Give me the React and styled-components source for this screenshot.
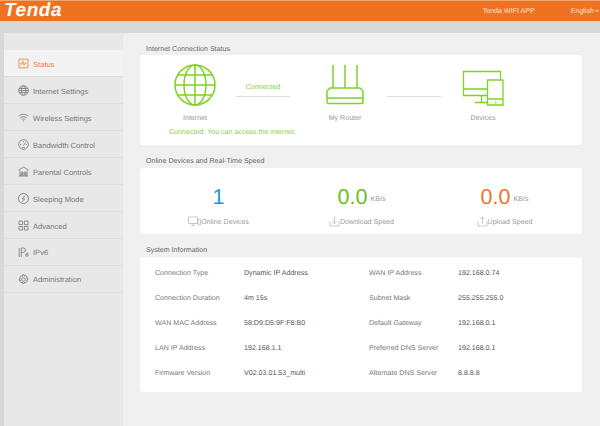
import React from 'react';
import styled, { createGlobalStyle } from 'styled-components';

const GlobalStyle = createGlobalStyle`
  html, body {
    margin: 0;
    padding: 0;
    background: #d8d8d8;
  }
  body {
    font-family: "Liberation Sans", Arial, sans-serif;
    text-rendering: geometricPrecision;
    overflow: hidden;
  }
`;

const Page = styled.div`
  width: 600px;
  height: 426px;
  display: flex;
  flex-direction: column;
  overflow: hidden;
`;

const Header = styled.header`
  height: 20px;
  flex: none;
  display: flex;
  align-items: center;
  background: #ef7221;
  border-top: 1px solid #f3a473;
  color: #fbe6d8;
  font-size: 7.1px;
`;

const Logo = styled.div`
  margin-left: 4px;
  font-size: 19px;
  font-weight: 700;
  font-style: italic;
  letter-spacing: 0.6px;
  color: #fff;
  line-height: 20px;
`;

const AppLink = styled.span`
  margin-left: auto;
`;

const Language = styled.span`
  margin-left: 36px;
  margin-right: 1px;
  display: flex;
  align-items: center;
  gap: 1px;
`;

const Caret = styled.i`
  width: 0;
  height: 0;
  border-left: 2px solid transparent;
  border-right: 2px solid transparent;
  border-top: 2px solid #fbe6d8;
`;

const Body = styled.div`
  flex: 1;
  display: flex;
  padding: 12px 0 0 4px;
  min-height: 0;
`;

const Sidebar = styled.nav`
  width: 119px;
  flex: none;
  padding-top: 17px;
  background: #e8e8e8;
`;

const NavItem = styled.div`
  height: 26px;
  display: flex;
  align-items: center;
  border-bottom: 1px solid #dedede;
  padding-left: 14px;
  gap: 4px;
  font-size: 7.6px;
  color: ${(p) => (p.$active ? '#ef7f3e' : '#777')};
  background: ${(p) => (p.$active ? '#f2f2f2' : 'transparent')};
`;

const NavLabel = styled.span`
  position: relative;
  top: ${(p) => (p.$raised ? 0 : 1)}px;
`;

const NavIcon = styled.svg`
  width: 11px;
  height: 11px;
  flex: none;
  fill: none;
  stroke: ${(p) => (p.$active ? '#ef7f3e' : '#777')};
  stroke-width: 0.8;
`;

const Main = styled.main`
  flex: 1;
  background: #f0f0f0;
  padding: 10px 18px 0 17px;
  border-radius: 2px 0 0 0;
`;

const SectionTitle = styled.h2`
  margin: 0 0 0 6px;
  height: 13px;
  line-height: 13px;
  font-size: 7.1px;
  font-weight: 400;
  color: #666;

  &:first-child {
    height: 12px;
  }
`;

const Card = styled.section`
  background: #fff;
  border-radius: 2px;
  height: ${(p) => p.$height}px;
  margin-bottom: ${(p) => p.$gap}px;
  box-sizing: border-box;
  box-shadow: 0 0 1px #e4e4e4;
`;

const StatusCard = styled(Card)`
  padding: 8px 0 0 30px;
`;

const StatusRow = styled.div`
  display: flex;
  align-items: flex-start;
`;

const Node = styled.div`
  width: 50px;
  display: flex;
  flex-direction: column;
  align-items: center;
  font-size: 7.1px;
  line-height: 10px;
  color: #999;
`;

const NodeIcon = styled.svg`
  width: 50px;
  height: 44px;
  fill: none;
  stroke: #7ed321;
  margin-bottom: 6px;
`;

const LinkLine = styled.div`
  width: 54px;
  height: 14px;
  margin: 0 ${(p) => p.$right}px 0 ${(p) => p.$left}px;
  border-bottom: 1px solid #ddd;
  text-align: center;
  font-size: 7.1px;
  line-height: 10px;
  padding-top: 19px;
  color: #86cf3d;
`;

const StatusNote = styled.p`
  margin: 4px 0 0 -1px;
  font-size: 7.1px;
  line-height: 10px;
  color: #85d03f;
`;

const SpeedGrid = styled.div`
  height: 100%;
  padding: 0 6px 0 7px;
  display: grid;
  grid-template-columns: repeat(3, 1fr);
`;

const Speed = styled.div`
  display: flex;
  flex-direction: column;
  align-items: center;
`;

const ValueRow = styled.div`
  height: 30px;
  margin-top: 14px;
  display: flex;
  align-items: center;
  gap: 3px;
  color: ${(p) => p.$color};
  font-size: 21.5px;
  line-height: 30px;
`;

const Unit = styled.span`
  font-size: 7.1px;
  color: #999;
  margin-top: 4px;
`;

const SpeedLabel = styled.div`
  margin-top: 4px;
  display: flex;
  align-items: center;
  font-size: 7.1px;
  line-height: 10px;
  color: #999;
`;

const SmallIcon = styled.svg`
  width: ${(p) => p.$width || 11}px;
  height: 11px;
  fill: none;
  stroke: #bbb;
  stroke-width: 0.8;
`;

const InfoGrid = styled.dl`
  margin: 0;
  padding: 3px 0 0 15px;
  display: grid;
  grid-template-columns: 89px 125px 89px 1fr;
  grid-auto-rows: 25px;
  align-items: center;
  font-size: 7.1px;
`;

const InfoLabel = styled.dt`
  color: #777;
`;

const InfoValue = styled.dd`
  margin: 0;
  color: #555;
`;

const navItems = [
  ['Status', <path key="s" d="M1 1.200h9v8.600H1zM2 6h1.800l1-2.700 1.200 4 1-2.300h2" />],
  ['Internet Settings', <path key="i" d="M5.500 .7a4.800 4.800 0 1 0 .01 0zM5.500 .7c-3 2.700-3 7 0 9.600M5.500 .7c3 2.700 3 7 0 9.600M1.200 3.500h8.600M.7 5.500h9.600M1.200 7.500h8.600" />],
  ['Wireless Settings', <path key="w" d="M.5 4.200c2.900-2.500 7.100-2.500 10 0M2.200 5.900c1.900-1.600 4.700-1.600 6.600 0M3.800 7.500c1-.8 2.400-.8 3.400 0M5 9h1" />],
  ['Bandwidth Control', <path key="b" d="M5.500 .7a4.800 4.800 0 1 0 .01 0zM5.500 6.500l2-3M2.200 5.500h1M7.800 5.500h1M5.500 2.200v1M4 8.700h3" />],
  ['Parental Controls', <path key="p" d="M.5 4.300l5-3.300 5 3.300M2 4.500v5.500M9 4.500v5.500M.8 10h9.400M4 6a1 1 0 1 0 .01 0zM7 6a1 1 0 1 0 .01 0zM3 10V8.300h2V10M6 10V8.300h2V10" />],
  ['Sleeping Mode', <path key="z" d="M5.500 .5a5 5 0 1 0 .01 0zM6.800 2.800 4.300 6h2.400l-2.200 2.500" />],
  ['Advanced', <path key="a" d="M1 1h3.600v3.600H1zM6.400 1H10v3.600H6.400zM1 6.400h3.600V10H1zM6.400 6.400H10V10H6.400z" />],
  ['IPv6', <path key="6" d="M1.200 1v9M3.300 10V1h2a2.100 2.100 0 0 1 0 4.400h-2M10.200 6.300c-1.500-.6-2.400.4-2.400 1.800a1.200 1.200 0 1 0 2.400 0c0-.9-1.400-1.300-2.400-.3" />],
  ['Administration', <path key="g" d="M5.500 3.700a1.800 1.800 0 1 0 .01 0zM4.700 .8h1.600l.3 1.300 1.200-.6 1.300 1.300-.6 1.200 1.300.3v1.600l-1.300.3.6 1.200-1.300 1.300-1.200-.6-.3 1.300H4.700l-.3-1.300-1.200.6-1.300-1.300.6-1.200L1.200 6.300V4.700l1.300-.3-.6-1.200 1.300-1.300 1.200.6z" />],
];

const infoRows = [
  ['Connection Type', 'Dynamic IP Address', 'WAN IP Address', '192.168.0.74'],
  ['Connection Duration', '4m 15s', 'Subnet Mask', '255.255.255.0'],
  ['WAN MAC Address', '58:D9:D5:9F:F8:B0', 'Default Gateway', '192.168.0.1'],
  ['LAN IP Address', '192.168.1.1', 'Preferred DNS Server', '192.168.0.1'],
  ['Firmware Version', 'V02.03.01.53_multi', 'Alternate DNS Server', '8.8.8.8'],
];

const GlobeIcon = () => (
  <NodeIcon viewBox="0 0 50 44" strokeWidth="1.500">
    <circle cx="25" cy="22" r="20" />
    <ellipse cx="25" cy="22" rx="11" ry="20" />
    <path d="M25 2v40M5 22h40M8 12h34M8 32h34" />
  </NodeIcon>
);

const RouterIcon = () => (
  <NodeIcon viewBox="0 0 50 44" strokeWidth="1.500">
    <path d="M13 2v23M25 2v23M37 2v23" />
    <path d="M10 25h30l3 3v11a1.500 1.500 0 0 1-1.500 1.500h-33A1.500 1.500 0 0 1 7 39V28zM7 35h36" />
  </NodeIcon>
);

const DevicesIcon = () => (
  <NodeIcon viewBox="0 0 50 44" strokeWidth="1.300">
    <path d="M29 32.500H5.500V8.500h37v8M5.500 26H29M23.500 32.500V39M17 39.500h12" />
    <path d="M29.500 17h15.500v25H29.500zM29.500 36h15.500M37 39.500h1.500" />
  </NodeIcon>
);

const App = () => (
  <Page>
    <GlobalStyle />
    <Header>
      <Logo>Tenda</Logo>
      <AppLink>Tenda WIFI APP</AppLink>
      <Language>
        English <Caret />
      </Language>
    </Header>
    <Body>
      <Sidebar>
        {navItems.map(([label, icon], i) => (
          <NavItem key={label} $active={i === 0}>
            <NavIcon viewBox="0 0 11 11" $active={i === 0}>{icon}</NavIcon>
            <NavLabel $raised={i >= 7}>{label}</NavLabel>
          </NavItem>
        ))}
      </Sidebar>
      <Main>
        <SectionTitle>Internet Connection Status</SectionTitle>
        <StatusCard $height={90} $gap={10}>
          <StatusRow>
            <Node><GlobeIcon />Internet</Node>
            <LinkLine $left={16} $right={30}>Connected</LinkLine>
            <Node><RouterIcon />My Router</Node>
            <LinkLine $left={17} $right={17} />
            <Node><DevicesIcon />Devices</Node>
          </StatusRow>
          <StatusNote>Connected. You can access the internet.</StatusNote>
        </StatusCard>

        <SectionTitle>Online Devices and Real-Time Speed</SectionTitle>
        <Card $height={66} $gap={10}>
          <SpeedGrid>
            <Speed>
              <ValueRow $color="#1b9ad6">1</ValueRow>
              <SpeedLabel>
                <SmallIcon viewBox="0 0 13 11" $width={13}>
                  <path d="M.5 1h9v6.500h-9zM3 9.500h4M5 7.500v2M10 3.500h2.500v5.500H10z" />
                </SmallIcon>
                Online Devices
              </SpeedLabel>
            </Speed>
            <Speed>
              <ValueRow $color="#64bf17">0.0<Unit>KB/s</Unit></ValueRow>
              <SpeedLabel>
                <SmallIcon viewBox="0 0 11 11">
                  <path d="M1 5.500v4.500h9V5.500M5.500 .5v7M3.300 5.500l2.200 2.200 2.200-2.200" />
                </SmallIcon>
                Download Speed
              </SpeedLabel>
            </Speed>
            <Speed>
              <ValueRow $color="#f0722a">0.0<Unit>KB/s</Unit></ValueRow>
              <SpeedLabel>
                <SmallIcon viewBox="0 0 11 11">
                  <path d="M1 5.500v4.500h9V5.500M5.500 8V.8M3.300 3l2.200-2.200L7.700 3" />
                </SmallIcon>
                Upload Speed
              </SpeedLabel>
            </Speed>
          </SpeedGrid>
        </Card>

        <SectionTitle>System Information</SectionTitle>
        <Card $height={135} $gap={0}>
          <InfoGrid>
            {infoRows.map(([a, b, c, d]) => (
              <React.Fragment key={a}>
                <InfoLabel>{a}</InfoLabel>
                <InfoValue>{b}</InfoValue>
                <InfoLabel>{c}</InfoLabel>
                <InfoValue>{d}</InfoValue>
              </React.Fragment>
            ))}
          </InfoGrid>
        </Card>
      </Main>
    </Body>
  </Page>
);

export default App;
